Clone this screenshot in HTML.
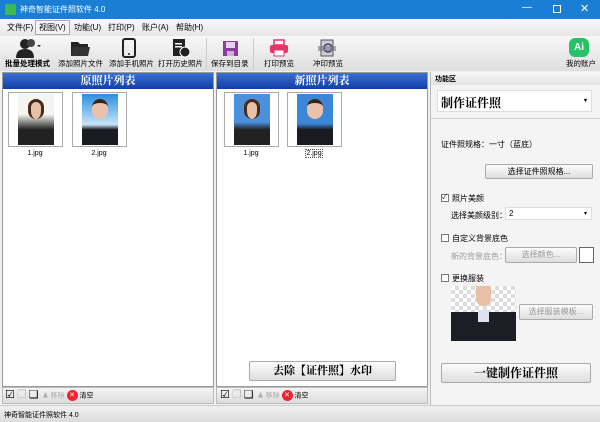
<!DOCTYPE html>
<html><head><meta charset="utf-8"><style>
*{margin:0;padding:0;box-sizing:border-box}
body{width:600px;height:422px;overflow:hidden;background:#f0f0f0;font-family:"Liberation Sans","Noto Sans CJK SC",sans-serif;font-size:8px;color:#000;position:relative}
.a{position:absolute}
.title{left:0;top:0;width:600px;height:19px;background:#1a7fd4;color:#fff;font-size:8px}
.menu{left:0;top:19px;width:600px;height:17px;background:linear-gradient(#fafafa,#e6e6e6)}
.menu span{position:absolute;top:3px;font-size:8px}
.tb{left:0;top:36px;width:600px;height:35px;background:linear-gradient(#f8f8f8,#dedede)}
.tb .lbl{position:absolute;top:22px;font-size:7.5px;white-space:nowrap}
.ph{height:16px;background:linear-gradient(#3b6fd0,#0f3ea8);color:#fff;font-family:"Liberation Serif","Noto Serif CJK SC",serif;font-size:11px;text-align:center;line-height:16px;font-weight:bold}
.panel{background:#fff;border:1px solid #9a9a9a}
.th{border:1px solid #aaa;background:#fff}
.cap{position:absolute;font-size:7px;text-align:center;width:54px}
.btm{height:17px;background:linear-gradient(#f4f4f4,#dcdcdc);border:1px solid #bbb}
.btn{border:1px solid #aaa;background:linear-gradient(#fcfcfc,#dedede);text-align:center;border-radius:2px}
.chk{width:8px;height:8px;border:1px solid #777;background:#fff}
.bi{position:absolute;top:390px;font-size:7px;white-space:nowrap;line-height:11px}
.bi i{font-style:normal;font-size:11px;vertical-align:middle}
</style></head><body>
<div class="a title">
 <div class="a" style="left:5px;top:4px;width:11px;height:11px;background:#3dbb52;border-radius:2px"></div>
 <span class="a" style="left:20px;top:4px">神奇智能证件照软件 4.0</span>
 <span class="a" style="left:522px;top:2px;font-size:10px">—</span>
 <div class="a" style="left:553px;top:5px;width:8px;height:8px;border:1px solid #fff"></div>
 <span class="a" style="left:580px;top:2px;font-size:11px">✕</span>
</div>
<div class="a menu">
 <span style="left:7px">文件(F)</span>
 <span style="left:35px;top:1px;border:1px solid #aaa;padding:1px 3px;background:#f4f4f4">视图(V)</span>
 <span style="left:74px">功能(U)</span>
 <span style="left:108px">打印(P)</span>
 <span style="left:142px">账户(A)</span>
 <span style="left:176px">帮助(H)</span>
</div>
<div class="a tb">
 <svg class="a" style="left:15px;top:2px" width="26" height="20"><circle cx="10" cy="6" r="5" fill="#222"/><path d="M1 20 Q1 11 10 11 Q19 11 19 20Z" fill="#222"/><circle cx="16" cy="5" r="4" fill="#444"/><path d="M22 7l2 2l2-2z" fill="#222"/></svg>
 <span class="lbl" style="left:5px;font-weight:bold">批量处理模式</span>
 <svg class="a" style="left:70px;top:3px" width="20" height="18"><path d="M1 3h7l2 2h8v12H1z" fill="#222"/><path d="M3 8h17l-2 9H1z" fill="#333"/></svg>
 <span class="lbl" style="left:58px">添加照片文件</span>
 <svg class="a" style="left:122px;top:2px" width="14" height="20"><rect x="1" y="1" width="12" height="18" rx="2" fill="none" stroke="#222" stroke-width="2"/><circle cx="7" cy="16" r="1" fill="#222"/></svg>
 <span class="lbl" style="left:109px">添加手机照片</span>
 <svg class="a" style="left:172px;top:2px" width="18" height="20"><rect x="1" y="1" width="12" height="17" fill="#222"/><rect x="3" y="5" width="7" height="1.5" fill="#fff"/><rect x="3" y="8" width="7" height="1.5" fill="#fff"/><circle cx="13" cy="14" r="5" fill="#222" stroke="#fff"/></svg>
 <span class="lbl" style="left:158px">打开历史照片</span>
 <div class="a" style="left:206px;top:2px;width:1px;height:32px;background:#ccc"></div>
 <svg class="a" style="left:222px;top:4px" width="17" height="17"><rect x="1" y="1" width="15" height="15" fill="#8b3d9c"/><rect x="4" y="2" width="9" height="6" fill="#e6d0ea"/><rect x="5" y="11" width="7" height="5" fill="#d0b0d8"/></svg>
 <span class="lbl" style="left:211px">保存到目录</span>
 <div class="a" style="left:253px;top:2px;width:1px;height:32px;background:#ccc"></div>
 <svg class="a" style="left:269px;top:3px" width="20" height="18"><rect x="5" y="1" width="10" height="5" fill="none" stroke="#e8336b" stroke-width="1.5"/><rect x="1" y="6" width="18" height="8" rx="2" fill="#e8336b"/><rect x="5" y="11" width="10" height="6" fill="#fff" stroke="#e8336b"/></svg>
 <span class="lbl" style="left:264px">打印预览</span>
 <svg class="a" style="left:318px;top:3px" width="18" height="18"><rect x="3" y="1" width="12" height="16" fill="#ccd" stroke="#555"/><circle cx="10" cy="9" r="4" fill="none" stroke="#444" stroke-width="1.5"/><rect x="0" y="7" width="18" height="5" fill="#778" opacity=".6"/></svg>
 <span class="lbl" style="left:313px">冲印预览</span>
 <div class="a" style="left:569px;top:2px;width:20px;height:19px;background:#27c268;border-radius:6px;color:#fff;font-weight:bold;font-size:10px;text-align:center;line-height:19px">Ai</div>
 <span class="lbl" style="left:566px">我的账户</span>
</div>
<div class="a panel" style="left:2px;top:72px;width:212px;height:315px">
 <div class="ph">原照片列表</div>
 <div class="a th" style="left:5px;top:19px;width:55px;height:55px"><div class="a" style="left:9px;top:1px;width:36px;height:51px;background:linear-gradient(#f4f4f0 40%,#222 70%)"></div><div class="a" style="left:19px;top:6px;width:16px;height:20px;border-radius:8px;background:#e6c2a8;border:3px solid #4a2a1a;border-bottom:none"></div></div>
 <div class="a th" style="left:69px;top:19px;width:55px;height:55px"><div class="a" style="left:9px;top:1px;width:36px;height:51px;background:linear-gradient(#2a8ee0,#c8e4f8 60%,#1a1a22 70%)"></div><div class="a" style="left:19px;top:6px;width:16px;height:20px;border-radius:8px;background:#e8c2aa;border-top:4px solid #3a2418"></div></div>
 <div class="cap" style="left:5px;top:77px">1.jpg</div>
 <div class="cap" style="left:69px;top:77px">2.jpg</div>
</div>
<div class="a btm" style="left:2px;top:387px;width:212px"></div>
<div class="bi" style="left:5px"><i>☑</i> <i style="color:#bbb">❐</i> <i>❏</i> <span style="color:#aaa">&nbsp;♟ 移除</span> <span style="display:inline-block;width:11px;height:11px;border-radius:6px;background:#e23;color:#fff;text-align:center;line-height:11px;font-size:7px">✕</span> 清空</div>
<div class="a panel" style="left:216px;top:72px;width:212px;height:315px">
 <div class="ph">新照片列表</div>
 <div class="a th" style="left:7px;top:19px;width:55px;height:55px"><div class="a" style="left:9px;top:1px;width:36px;height:51px;background:linear-gradient(#4a90dc 55%,#222 70%)"></div><div class="a" style="left:19px;top:6px;width:16px;height:20px;border-radius:8px;background:#e6c2a8;border:3px solid #4a2a1a;border-bottom:none"></div></div>
 <div class="a th" style="left:70px;top:19px;width:55px;height:55px"><div class="a" style="left:9px;top:1px;width:36px;height:51px;background:linear-gradient(#3c86d8 58%,#1a1a22 70%)"></div><div class="a" style="left:19px;top:6px;width:16px;height:20px;border-radius:8px;background:#e8c2aa;border-top:4px solid #3a2418"></div></div>
 <div class="cap" style="left:7px;top:77px">1.jpg</div>
 <div class="cap" style="left:70px;top:77px"><span style="border:1px dotted #555">2.jpg</span></div>
 <div class="a btn" style="left:32px;top:288px;width:147px;height:20px;font-family:'Liberation Serif','Noto Serif CJK SC',serif;font-weight:bold;font-size:11px;line-height:18px">去除【证件照】水印</div>
</div>
<div class="a btm" style="left:216px;top:387px;width:212px"></div>
<div class="bi" style="left:220px"><i>☑</i> <i style="color:#bbb">❐</i> <i>❏</i> <span style="color:#aaa">&nbsp;♟ 移除</span> <span style="display:inline-block;width:11px;height:11px;border-radius:6px;background:#e23;color:#fff;text-align:center;line-height:11px;font-size:7px">✕</span> 清空</div>
<div class="a" style="left:430px;top:72px;width:170px;height:333px;background:#f4f4f4;border-left:1px solid #bbb">
 <div class="a" style="left:0;top:0;width:170px;height:13px;background:linear-gradient(#f8f8f8,#e2e2e2)"><span class="a" style="left:4px;top:2px;font-size:7px;font-weight:bold">功能区</span></div>
 <div class="a" style="left:6px;top:18px;width:155px;height:22px;background:#fff;border:1px solid #ddd;font-family:'Liberation Serif','Noto Serif CJK SC',serif;font-size:12px;font-weight:bold;padding:3px 3px">制作证件照<span class="a" style="right:4px;top:6px;font-size:6px">▾</span></div>
 <div class="a" style="left:0;top:46px;width:170px;height:1px;background:#ccc"></div>
 <span class="a" style="left:10px;top:67px">证件照规格：一寸（蓝底）</span>
 <div class="a btn" style="left:54px;top:92px;width:108px;height:15px;line-height:13px">选择证件照规格...</div>
 <div class="a chk" style="left:10px;top:122px;font-size:7px;line-height:6px">✓</div><span class="a" style="left:21px;top:121px">照片美颜</span>
 <span class="a" style="left:20px;top:138px">选择美颜级别：</span>
 <div class="a" style="left:74px;top:135px;width:87px;height:13px;background:#fff;border:1px solid #ddd;padding:1px 3px">2<span class="a" style="right:4px;top:2px;font-size:6px">▾</span></div>
 <div class="a chk" style="left:10px;top:162px"></div><span class="a" style="left:21px;top:161px">自定义背景底色</span>
 <span class="a" style="left:20px;top:179px;color:#999">新的背景底色：</span>
 <div class="a btn" style="left:74px;top:175px;width:72px;height:16px;line-height:14px;color:#999">选择颜色...</div>
 <div class="a" style="left:148px;top:175px;width:15px;height:16px;border:1px solid #666;background:#fff"></div>
 <div class="a chk" style="left:10px;top:202px"></div><span class="a" style="left:21px;top:201px">更换服装</span>
 <div class="a" style="left:20px;top:214px;width:65px;height:55px;background:repeating-conic-gradient(#ddd 0 25%,#fff 0 50%) 0 0/8px 8px"><div class="a" style="left:0;top:26px;width:65px;height:29px;background:#1c1e26"></div><div class="a" style="left:27px;top:24px;width:11px;height:12px;background:#dde2f0"></div><div class="a" style="left:25px;top:0;width:15px;height:20px;background:#e8c0a8;border-radius:0 0 7px 7px"></div></div>
 <div class="a btn" style="left:88px;top:232px;width:74px;height:16px;line-height:14px;color:#999">选择服装模板...</div>
 <div class="a btn" style="left:10px;top:291px;width:150px;height:20px;font-family:'Liberation Serif','Noto Serif CJK SC',serif;font-weight:bold;font-size:12px;line-height:18px">一键制作证件照</div>
</div>
<div class="a" style="left:0;top:405px;width:600px;height:17px;background:linear-gradient(#f0f0f0,#dcdcdc);border-top:1px solid #ccc"><span class="a" style="left:4px;top:4px;font-size:7px">神奇智能证件照软件 4.0</span></div>
</body></html>
